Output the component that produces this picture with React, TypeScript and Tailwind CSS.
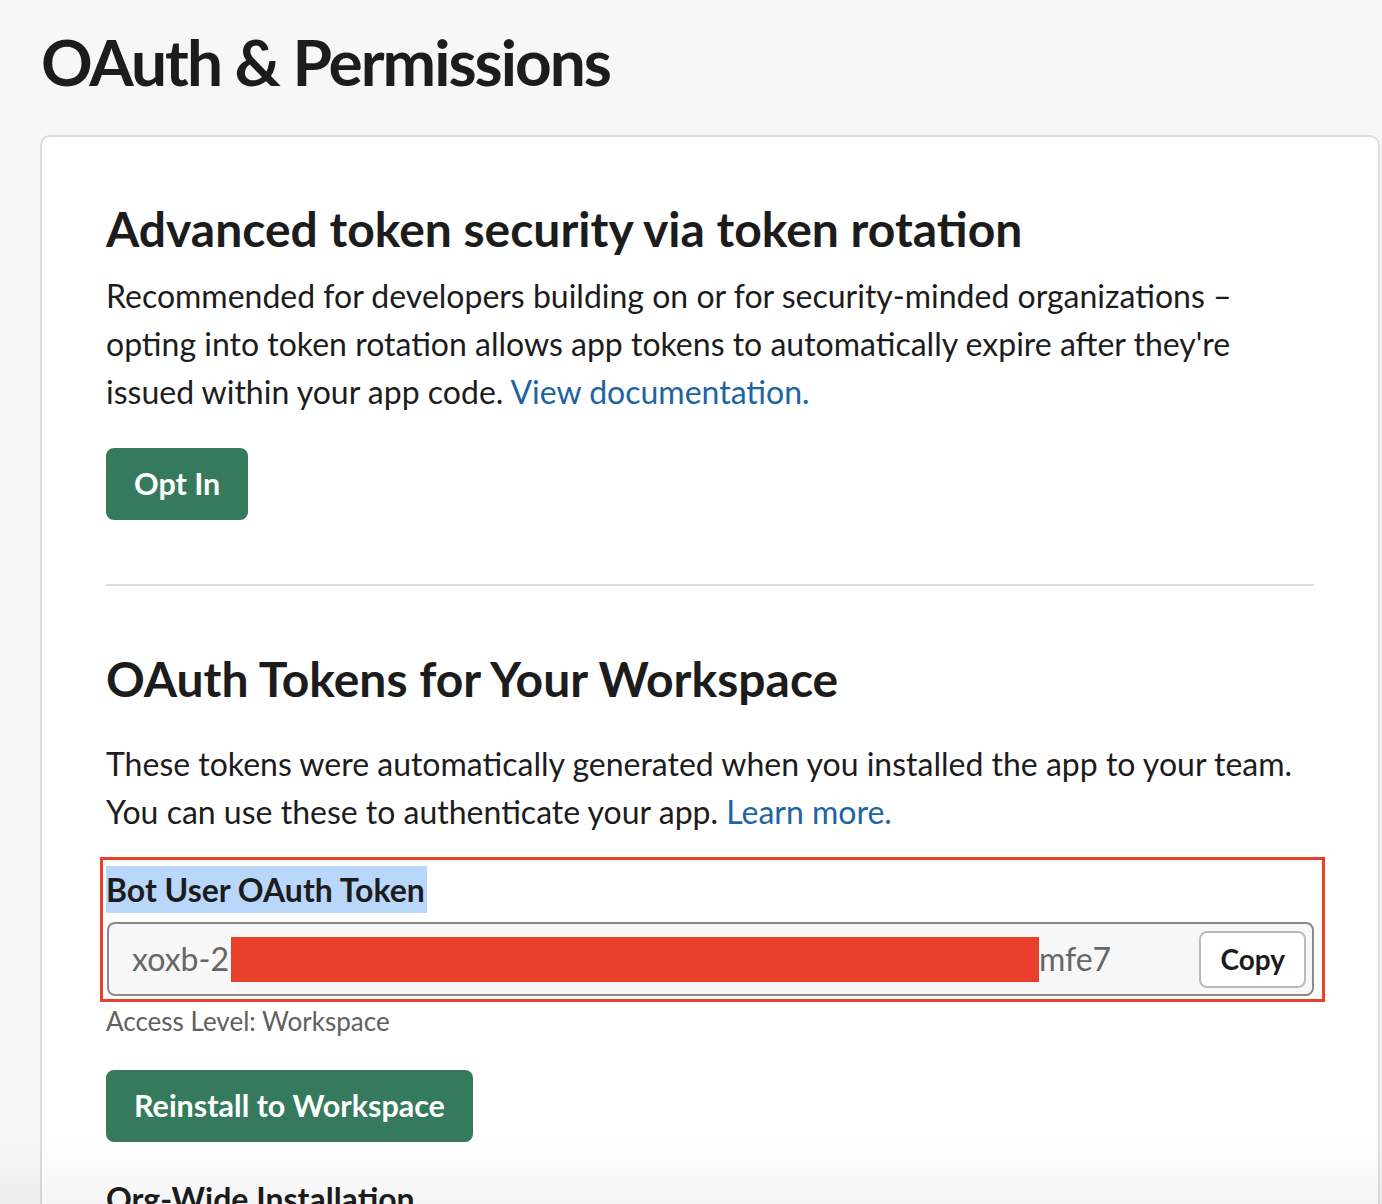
export default function App() {
  return (
    <div className="relative h-[1204px] overflow-hidden bg-[#f7f7f7] font-['Lato','Noto_Sans',sans-serif] text-[#1d1c1d]">
      <h1 className="pl-[41px] pt-[23px] text-[64px] font-bold leading-[77px] tracking-[-2px]">
        OAuth &amp; Permissions
      </h1>

      <div className="ml-[40px] mr-[2px] mt-[35px] rounded-t-[10px] border-2 border-[#dddddd] bg-white px-[64px] pb-[80px] pt-[65px]">
        <h2 className="text-[48px] font-bold leading-[53px]">Advanced token security via token rotation</h2>
        <p className="mt-[17px] text-[32px] leading-[48px]">
          Recommended for developers building on or for security-minded organizations – opting into token rotation
          allows app tokens to automatically expire after they're issued within your app code.{' '}
          <a className="text-[#1d64a3]">View documentation.</a>
        </p>
        <button className="mt-[32px] flex h-[72px] items-center rounded-[8px] bg-[#357a5c] px-[28px] text-[30.5px] font-bold text-white">
          Opt In
        </button>

        <div className="mt-[64px] h-[2px] bg-[#dddddd]" />

        <h2 className="mt-[66px] text-[48px] font-bold leading-[53px]">OAuth Tokens for Your Workspace</h2>
        <p className="mt-[35px] text-[32px] leading-[48px]">
          These tokens were automatically generated when you installed the app to your team. You can use these to
          authenticate your app. <a className="text-[#1d64a3]">Learn more.</a>
        </p>

        <div className="relative mt-[30px]">
          <div className="pointer-events-none absolute -bottom-[6px] -left-[6px] -right-[11px] -top-[9px] border-[3px] border-[#e8402a]" />
          <span className="inline-block bg-[#b9d6fb] pr-[2px] text-[32px] font-bold leading-[47px]">
            Bot User OAuth Token
          </span>
          <div className="mt-[9px] ml-px flex h-[74px] items-center rounded-[8px] border-2 border-[#8a8a8a] bg-[#f7f7f7] pl-[23px] pr-[6px]">
            <span className="text-[32px] text-[#666666]">xoxb-2</span>
            <span className="ml-[2px] inline-block h-[45px] w-[808px] bg-[#e8402a]" />
            <span className="text-[32px] text-[#666666]">mfe7</span>
            <button className="ml-auto flex h-[57px] items-center rounded-[8px] border-2 border-[#bbbbbb] bg-white px-[19px] text-[28px] font-bold">
              Copy
            </button>
          </div>
        </div>
        <p className="mt-[7px] text-[26px] leading-[36px] text-[#616061]">Access Level: Workspace</p>

        <button className="mt-[31px] flex h-[72px] items-center rounded-[8px] bg-[#357a5c] px-[28px] text-[30.5px] font-bold text-white">
          Reinstall to Workspace
        </button>

        <h3 className="mt-[37px] text-[32px] font-bold leading-[40px]">Org-Wide Installation</h3>
      </div>

      <div className="pointer-events-none absolute inset-x-0 bottom-0 h-[70px] bg-linear-to-b from-transparent to-black/[0.04]" />
    </div>
  )
}
